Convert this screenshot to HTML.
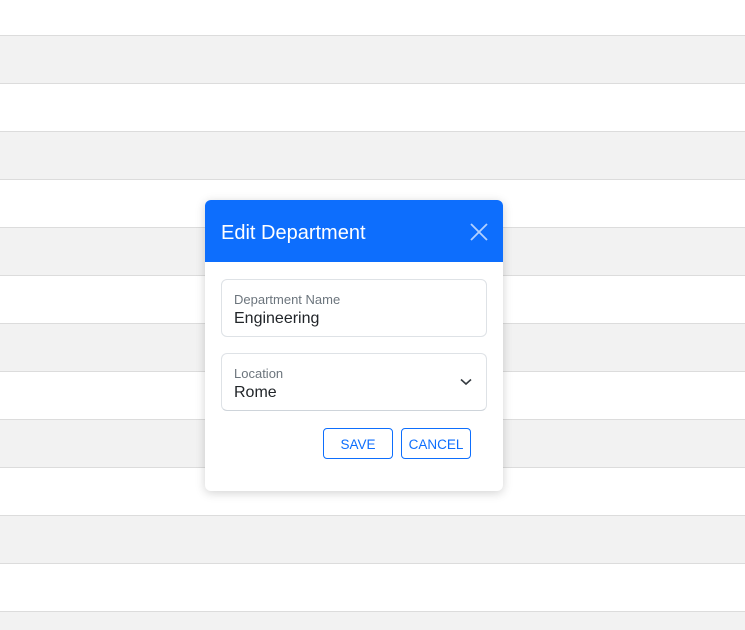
<!DOCTYPE html>
<html><head><meta charset="utf-8"><style>
html,body{margin:0;padding:0;width:745px;height:630px;overflow:hidden;background:#fff;font-family:"Liberation Sans","DejaVu Sans",sans-serif;position:relative}
.row{position:absolute;left:0;width:745px;height:47px;border-top:1px solid #dcdcdc;background:#f2f2f2}
.modal{position:absolute;left:205px;top:200px;width:298px;height:291px;background:#fff;border-radius:6px;box-shadow:0 2px 10px rgba(0,0,0,.18);overflow:hidden}
.hdr{height:62px;background:#0d6efd;color:#fff;font-size:20px;line-height:67px;padding-left:16px}
.x{position:absolute;left:265px;top:23px}
.fld{position:absolute;left:16px;width:264px;height:56px;border:1px solid #dee2e6;border-radius:6px}
.lbl{position:absolute;left:12px;top:12px;font-size:13px;color:#6c757d}
.val{position:absolute;left:12px;top:30px;font-size:16px;color:#212529}
.btn{position:absolute;top:228px;height:29px;border:1px solid #0d6efd;border-radius:4px;color:#0d6efd;font-size:13.5px;text-align:center;line-height:31px}
</style></head><body>
<div class="row" style="top:35px"></div>
<div class="row" style="top:83px;background:#fff"></div>
<div class="row" style="top:131px"></div>
<div class="row" style="top:179px;background:#fff"></div>
<div class="row" style="top:227px"></div>
<div class="row" style="top:275px;background:#fff"></div>
<div class="row" style="top:323px"></div>
<div class="row" style="top:371px;background:#fff"></div>
<div class="row" style="top:419px"></div>
<div class="row" style="top:467px;background:#fff"></div>
<div class="row" style="top:515px"></div>
<div class="row" style="top:563px;background:#fff"></div>
<div class="row" style="top:611px"></div>
<div class="modal">
<div class="hdr">Edit Department</div>
<svg class="x" width="18" height="18" viewBox="0 0 18 18"><path d="M1 1L17 17M17 1L1 17" stroke="#b3d1ff" stroke-width="1.8"/></svg>
<div class="fld" style="top:79px"><div class="lbl">Department Name</div><div class="val">Engineering</div></div>
<div class="fld" style="top:153px;border-bottom-color:#ced4da"><div class="lbl">Location</div><div class="val">Rome</div>
<svg style="position:absolute;left:238px;top:24px" width="12" height="8" viewBox="0 0 12 8"><path d="M1 1.5L6 6L11 1.5" stroke="#343a40" stroke-width="1.6" fill="none"/></svg></div>
<div class="btn" style="left:118px;width:68px">SAVE</div>
<div class="btn" style="left:196px;width:68px">CANCEL</div>
</div>
</body></html>
